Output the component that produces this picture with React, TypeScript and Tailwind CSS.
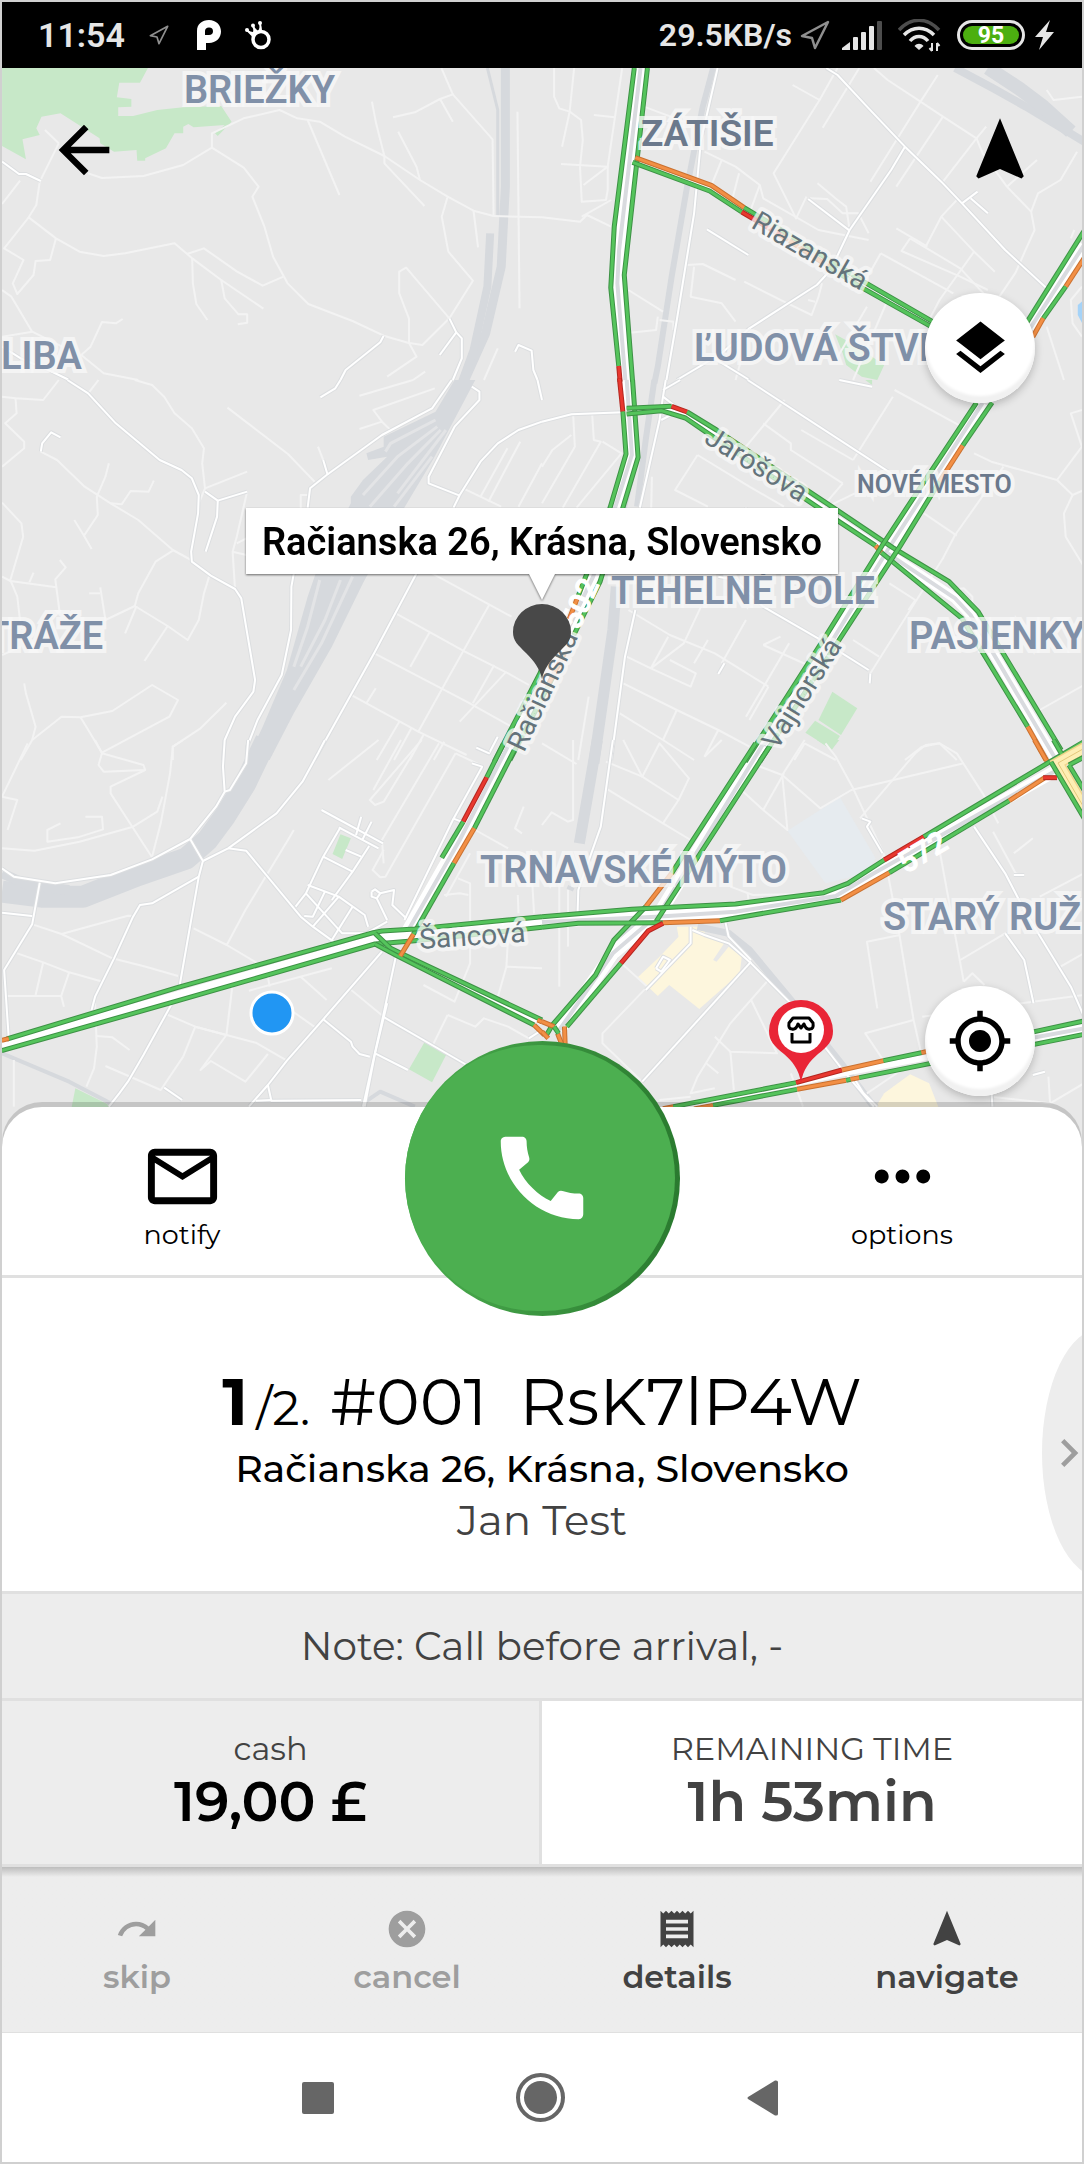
import React from "react";
import {
  MdArrowBack,
  MdCall,
  MdCancel,
  MdChevronRight,
  MdGpsFixed,
  MdLayers,
  MdMailOutline,
  MdMoreHoriz,
  MdNavigation,
  MdReceipt,
  MdRedo,
} from "react-icons/md";

type Flow = "free" | "slow" | "jam";
type TrafficLine = [Flow, string];

interface TileData {
  x: number;
  y: number;
  parks?: string[];
  sand?: string[];
  pale?: string[];
  water?: string[];
  rails?: [number, string][];
  railAreas?: string[];
  railGaps?: string[];
  lanes?: string[];
  streets?: string[];
  casings?: [number, string][];
  traffic?: TrafficLine[];
}

const FLOW: Record<Flow, [string, string]> = {
  free: ["#3d9145", "#55c45c"],
  slow: ["#c9702f", "#f28f45"],
  jam: ["#b3261f", "#e8382f"],
};

// Each tile is drawn on its own 1568-unit-wide grid, three units per pixel in height.
const TILES: TileData[] = [
  {
    x: 0,
    y: 0,
    parks: [
      "6,204 428,204 405,248 345,248 338,292 380,297 380,320 342,322 342,348 385,348 455,330 530,322 640,318 670,365 630,408 622,400 650,375 560,382 545,372 530,380 530,400 505,400 480,445 420,475 420,482 397,482 395,450 330,455 290,430 288,415 175,340 120,350 105,385 115,405 65,418 75,478 6,438",
    ],
    rails: [
      [9, "1462,204 1462,560 1450,800 1405,1000 1340,1150"],
      [3, "1410,204 1440,330 1440,650"],
      [8, "1418,700 1410,860 1370,1050 1335,1150"],
    ],
    lanes: [
      "255,520 295,534 415,528 530,495 613,443 705,503 748,560 730,590 765,680 790,770 832,850 892,912 1020,963 1110,1007 1180,1028 1222,1035 1300,955 1368,842 1297,755 1278,650 1295,590 1215,540 1112,468 998,410 925,365 860,355 809,330 705,355 613,400 613,443",
      "170,430 115,545 105,615 83,652 12,745 68,780 37,850 50,882 97,825 103,783 145,780 162,715",
      "6,612 58,542",
      "83,652 162,715 230,755 300,768 362,760 505,730 556,775 640,840 762,926",
      "541,762 590,745 686,815 760,857 820,830",
      "556,775 558,850 568,912 600,960",
      "640,840 650,895 690,943 715,943 715,968 688,973",
      "890,360 982,585",
      "1076,305 1088,370 1112,468 1112,490 1228,618",
      "1152,395 1205,500 1215,540",
      "1137,352 1200,337 1273,297 1310,283 1277,204",
      "1273,297 1310,365",
      "1310,283 1425,418 1428,650",
      "1295,590 1370,632 1428,648",
      "1370,632 1383,742",
      "1300,955 1175,803 1155,815 1155,880 1183,955 1183,1028 1205,1070 1120,1130",
      "1497,335 1503,925",
      "1428,648 1568,652",
      "355,957 335,970 295,966 262,1040 235,1065 300,1120 400,1140",
      "6,870 33,890 93,995 180,1040",
      "6,1010 93,995",
      "1230,1115 1195,1140",
      "1440,1045 1400,1140",
      "130,390 170,430",
    ],
    streets: [
      "6,485 55,522 75,522 118,543",
      "1110,1007 1100,1027 1000,1110 985,1140",
      "1300,955 1320,997 1336,1015 1336,1075 1310,1140",
      "1320,997 1272,1065",
      "1490,1055 1500,1035 1538,1052 1543,1110 1555,1140",
      "6,1040 60,1075 140,1110 200,1140",
    ],
  },
  {
    x: 542,
    y: 0,
    parks: ["848,1003 905,1035 990,1095 970,1140 925,1130 880,1095 870,1060"],
    water: ["1568,900 1550,915 1550,945 1568,980"],
    rails: [
      [6, "495,204 465,320 418,570 375,830 335,1100 325,1150"],
      [8, "1195,204 1305,265 1400,320 1568,425"],
      [14, "1290,204 1380,265 1450,320 1530,395"],
    ],
    lanes: [
      "35,204 35,290 50,325 80,335 113,360 118,420 110,500 115,605 185,600 190,570 190,500 55,492",
      "93,204 80,335 58,440",
      "150,345 210,352",
      "232,204 190,500 120,555",
      "115,650 200,600",
      "0,652 110,665 130,645 200,680",
      "725,255 803,300 855,204",
      "803,300 670,520 735,655 765,590",
      "918,204 812,383",
      "960,204 1000,240 1095,305 1160,350 1257,415 1285,380",
      "1145,225 1095,305 950,545",
      "1160,350 1025,560",
      "1257,415 1275,460 1345,560 1415,635 1425,690 1398,752 1370,818 1310,910",
      "1257,415 1160,545",
      "1432,480 1345,560",
      "1548,455 1500,540 1435,580 1415,635",
      "295,320 450,380",
      "470,455 560,500 630,555 640,595 800,690 945,720",
      "520,480 490,556",
      "570,520 550,600",
      "630,555 600,640",
      "797,550 855,600 880,620 890,690",
      "775,595 825,597 870,640 915,640 945,700",
      "1065,715 1040,753 1210,830 1290,870",
      "1065,715 1210,805 1295,900",
      "1025,685 1115,740",
      "1155,650 1250,755 1310,815",
      "1200,600 1155,650 1110,740",
      "980,760 1190,880",
      "980,760 920,870",
      "1250,755 1150,900 1120,960",
      "420,795 465,792 560,840",
      "440,800 430,890 520,910 560,965",
      "585,845 700,905 780,945 800,890 810,850",
      "770,900 790,905",
      "250,870 350,935",
      "335,950 330,990 240,1000",
      "340,960 380,965 380,990",
      "1000,900 900,1140",
      "940,920 850,1080",
      "600,990 560,1140",
      "1460,270 1480,300 1562,290",
      "1540,690 1530,715",
      "1562,860 1530,900 1535,970 1562,1010",
      "1460,980 1510,1140",
    ],
    streets: [
      "508,204 460,420 440,640 390,960 360,1140",
      "822,204 855,225 945,325 1050,440 1155,545 1215,610 1340,750 1460,865",
      "1050,440 1010,510 890,690 835,810 795,855 600,985",
      "1215,610 1260,575",
      "1240,595 1290,640",
      "770,597 890,692",
      "477,688 597,765",
      "390,1140 520,1060 600,985",
      "490,1070 600,1140",
    ],
    casings: [
      [13, "285,204 223,750 218,850 242,1150"],
      [5, "270,480 487,565 690,690 1130,974"],
      [13, "1568,735 1412,985"],
    ],
    traffic: [
      ["free", "267,204 209,680 199,863 222,1098"],
      ["jam", "222,1098 226,1145"],
      ["free", "305,204 275,480 238,825 262,1145"],
      ["slow", "270,473 490,556 585,623"],
      ["free", "585,623 700,695 930,845 1130,965"],
      ["free", "262,487 485,573 578,636"],
      ["jam", "578,636 690,705"],
      ["slow", "690,705 830,800"],
      ["free", "830,800 920,860 1130,982"],
      ["free", "1568,693 1395,980"],
      ["slow", "1568,775 1515,860"],
      ["free", "1515,860 1450,955"],
      ["slow", "1450,955 1420,1010"],
    ],
  },
  {
    x: 0,
    y: 380,
    railAreas: [
      "1315,0 1375,0 1255,235 1160,400 1050,610 960,800 850,1000 780,1140 715,1140 760,1040 830,870 890,650 920,560 1015,370 1015,350 1050,300 1120,230 1065,240 1060,220 1110,200 1110,170 1260,95",
    ],
    railGaps: [
      "1260,120 1130,190 1115,215",
      "1265,140 1150,230 1050,345",
      "1275,150 1180,250 1070,380",
      "1290,150 1150,340",
      "1250,230 1140,380",
      "925,600 890,740 850,860",
      "985,600 940,720 870,860",
      "1020,590 930,790 850,930",
    ],
    lanes: [
      "6,50 45,55 125,60 170,0",
      "45,55 48,100 15,130 70,185 70,205 6,260",
      "255,40 285,0",
      "390,0 440,15 475,50 505,100 555,145 590,205 585,250 593,325 715,275",
      "658,83 833,222 910,305",
      "315,250 305,290 280,350 283,405 243,467 215,420",
      "243,467 265,507",
      "118,215 165,240 245,320 320,370 400,420 500,510 553,540",
      "320,370 352,373 378,333 430,335 445,302",
      "6,368 62,430 67,470 30,600 50,650 60,740",
      "6,590 30,603 163,622 160,598 190,562 173,540",
      "85,607 97,578",
      "163,622 173,700",
      "290,622 305,720 390,678 400,640 450,545 500,512",
      "258,640 290,640",
      "390,678 485,738 543,780 575,720 590,640 605,590",
      "485,738 418,843",
      "395,678 362,760",
      "6,825 60,800",
      "70,910 75,940 103,1040 93,1080 60,1140",
      "93,1080 178,1010 233,1012 325,993 440,915 515,960 490,1010 295,1118",
      "233,1012 295,1118",
      "655,968 580,1045 500,1100 500,1140",
      "715,335 685,470 673,515 680,630",
      "673,515 713,525",
      "685,490 713,475",
      "593,325 575,370",
      "870,385 870,345 890,345",
      "1040,47 1195,0",
      "1258,25 1080,90 1105,125 1130,150",
      "1040,147 1105,125",
      "1468,205 1390,350",
      "1505,185 1413,365",
      "1568,250 1500,380",
      "1340,325 1450,380",
      "1250,580 1480,710",
      "1415,675 1285,915 1210,1055",
      "1145,700 1345,815 1470,880 1530,915",
      "1243,757 1187,860",
      "1083,820 1350,965 1480,1040",
      "1430,855 1368,970",
      "1465,875 1330,1025",
      "1013,943 1210,1055 1350,1125",
      "1087,925 1060,970",
      "1155,1025 1090,1140",
      "1190,1045 1140,1140",
      "1225,1065 1185,1140",
      "1285,1085 1255,1140",
      "920,200 935,240",
    ],
    streets: [
      "195,0 255,40 335,130 462,240 525,270 555,295 575,345 573,400 553,515 555,545 610,587 680,627 698,655 738,900 733,935 680,1010 650,1080 645,1140",
      "118,215 122,190 148,157 175,172",
      "593,335 630,362 715,335",
      "630,362 628,410 595,515",
      "985,0 970,25 927,52",
      "1307,0 1250,85 1105,165 945,285 897,325 890,383",
      "935,240 948,285",
      "1365,20 1387,35 1387,60 1315,140 1240,290 1240,310 1330,347",
      "1568,125 1500,150 1440,190 1390,245 1330,345 1312,383",
      "1205,580 1083,818 910,1140",
      "850,580 843,620 842,750 815,885 745,1020 715,1100 715,1140",
      "1378,1103 1415,1120 1440,1070",
      "1555,0 1568,60",
    ],
    casings: [[12, "1600,880 1445,1150"]],
    traffic: [
      ["free", "1585,820 1562,880 1430,1145"],
      ["free", "1605,880 1475,1140"],
    ],
  },
  {
    x: 542,
    y: 380,
    parks: [
      "840,935 912,985 865,1065 800,1020",
      "790,1022 862,1068 838,1108 762,1058",
      "935,0 955,0 955,15",
    ],
    rails: [
      [6, "325,0 300,180 275,380"],
      [11, "215,620 205,750 150,1150"],
      [4, "262,0 278,220 240,383"],
    ],
    lanes: [
      "90,100 95,200 0,370",
      "145,100 150,180 170,185 60,383",
      "85,165 30,210 0,260",
      "175,185 230,220 100,383",
      "450,225 385,330 480,380",
      "450,225 600,320 700,380",
      "640,130 720,190 720,210 870,310",
      "702,60 590,200",
      "870,310 810,383",
      "900,240 750,150",
      "1015,50 900,240",
      "1020,30 1250,160",
      "905,340 820,383",
      "1250,220 1300,245 1490,300 1535,345 1510,400 1515,470 1568,560",
      "1490,300 1562,200 1530,100 1562,90",
      "1535,345 1568,330",
      "1335,260 1195,465 1160,535 980,830 950,880",
      "1105,400 1200,467",
      "1180,630 1220,625 1245,650 1245,690",
      "1005,610 1080,660 1060,690",
      "900,780 975,830",
      "250,690 370,765 500,820 655,920",
      "460,680 410,790 315,865",
      "590,720 520,850",
      "640,795 690,770",
      "640,795 800,870",
      "245,830 315,865 430,920 445,880 370,840",
      "315,865 365,770",
      "480,780 440,850",
      "235,910 390,990 510,1050 600,1100",
      "390,990 350,1080",
      "510,1050 470,1130",
      "225,1000 350,1080 440,1140",
      "715,790 590,1010",
      "655,920 600,1020",
      "135,950 105,1140",
      "760,1090 730,1140",
      "760,1090 850,1140",
      "1100,1100 1150,1090 1200,1140",
      "1050,1140 1100,1100",
      "1568,915 1440,990",
      "318,290 316,383",
    ],
    streets: [
      "0,125 85,103 235,97",
      "358,0 350,50 340,120 283,383",
      "270,690 240,830 200,1140",
      "595,0 1010,280",
      "350,30 400,0",
      "350,50 400,90 345,120",
      "510,590 560,600 640,680 815,785 945,870",
      "528,850 510,882",
      "950,880 948,910",
      "860,0 955,20",
      "590,383 590,395",
    ],
    casings: [
      [13, "245,0 260,225 148,590 60,780 -50,1000"],
      [4, "245,93 360,86 420,106 980,500"],
      [12, "1275,68 1000,510 835,790 608,1150"],
      [10, "1000,520 1195,655 1240,705 1482,1130"],
    ],
    traffic: [
      ["jam", "224,-5 234,95"],
      ["free", "234,95 243,222 197,383 130,580 104,650"],
      ["slow", "104,650 70,740"],
      ["slow", "65,820 20,910"],
      ["free", "262,0 278,232 234,383 168,605 92,765"],
      ["free", "245,85 375,79"],
      ["jam", "375,79 420,96"],
      ["free", "420,96 505,150 860,395 1015,503 1178,605 1262,695 1502,1110"],
      ["free", "245,102 345,92 415,114 480,160 855,422 965,497"],
      ["slow", "965,497 982,518"],
      ["free", "982,518 1215,715 1405,1040"],
      ["slow", "1405,1040 1462,1145"],
      ["free", "1257,68 1045,400 985,495 820,770 588,1145"],
      ["free", "1302,68 1217,197"],
      ["slow", "1217,197 1150,305"],
      ["free", "1150,305 1035,500 850,795 630,1145"],
    ],
  },
  {
    x: 0,
    y: 740,
    parks: [
      "985,283 1015,295 990,357 962,342",
      "1228,907 1292,942 1250,1027 1183,988",
      "218,1045 310,1092 350,1140 200,1140",
    ],
    rails: [
      [22, "770,0 710,130 650,230 600,300 540,355 400,405 240,470 120,470 6,455"],
      [10, "6,400 80,435 200,450"],
      [4, "6,940 200,1025 320,1090"],
      [4, "1050,1090 1100,1055 1200,1100"],
    ],
    lanes: [
      "80,10 6,170 50,180 22,270",
      "275,0 295,40 285,75 300,95 420,90 415,75 295,40",
      "420,90 320,140 320,160 445,360",
      "530,0 500,20 492,100 465,250 440,350",
      "6,325 100,332 230,305 385,260 455,215 470,170",
      "247,230 295,230 298,268 225,292 137,305 137,270 175,250",
      "850,270 833,300 710,510 656,615 560,565",
      "656,615 745,670",
      "94,553 178,582 370,527 385,528",
      "178,582 325,655 422,680 515,708",
      "50,640 125,667 200,697 297,725",
      "125,667 103,765",
      "200,697 177,768 185,800",
      "15,768 177,768",
      "275,790 280,920 272,985 250,1040",
      "280,888 325,892 375,930",
      "305,978 465,1050 530,950",
      "480,822 565,860 655,885 740,908 830,962",
      "565,860 530,950",
      "565,860 655,885 580,990 610,963 710,1025 775,942",
      "655,885 672,740",
      "720,752 960,685",
      "775,710 780,740",
      "870,710 945,780",
      "800,780 912,862",
      "40,960 40,1100",
      "1010,745 1110,830",
      "1095,0 950,120",
      "1160,0 1080,150",
      "1220,0 1070,180 1085,195 1110,185 1195,40",
      "1270,10 1105,300 1110,370",
      "1318,40 1115,410 1100,412 1078,390 1110,330",
      "1318,40 1400,80",
      "1225,735 1315,785 1360,670 1360,430 1325,415",
      "1285,465 1330,460 1355,465",
      "1295,825 1250,920",
      "1295,825 1375,860 1400,835 1470,860 1530,895",
      "1375,270 1470,325",
      "1515,200 1490,265 1510,280",
      "1470,590 1465,680 1568,685",
      "1465,680 1435,790",
      "1360,340 1290,470",
      "1498,465 1500,520",
      "1540,430 1545,520",
    ],
    streets: [
      "5,385 40,410 160,430 320,405 440,358 550,297 625,200 650,155 645,80 650,0",
      "650,155 665,150 712,70 718,0",
      "115,428 93,553 12,690 25,890",
      "6,518 93,528",
      "550,297 587,363 575,410 520,735",
      "587,363 660,325 800,220 875,125 920,40 940,0",
      "660,325 712,332 870,530 905,560 965,605",
      "575,410 440,490 405,495 385,530 330,655 275,770 265,810",
      "495,795 415,945 370,1025 345,1060 315,1100",
      "1105,635 935,838 830,962 775,1035 720,1100",
      "935,838 1015,905 1020,920 1040,942 1070,950",
      "1145,650 1108,830 1050,1100",
      "1120,790 1085,940 1055,1100",
      "1108,830 1350,975",
      "1085,940 1180,990",
      "775,1035 785,1082 1045,1080",
      "740,1082 785,1080",
      "475,1043 527,1080",
      "930,210 1108,310",
      "980,262 1095,325",
      "1045,230 1030,285",
      "1075,245 1048,300",
      "1068,318 1020,395 960,480",
      "985,262 935,350 885,460 855,500",
      "935,350 1020,395",
      "1000,330 1045,350",
      "890,435 980,470 1055,525 1065,560",
      "885,460 990,580 1060,580 1120,545",
      "940,455 905,530 880,528",
      "980,470 905,560",
      "1020,500 960,600",
      "1365,70 1395,80 1310,240 1170,540",
      "1310,235 1335,245",
      "1075,455 1085,448 1100,460 1090,475 1075,470 1075,455",
      "1100,460 1140,450 1135,495 1175,535",
      "1090,475 1120,540",
      "1378,23 1415,40",
      "1530,895 1568,870",
    ],
    casings: [
      [13, "1471,15 1330,300 1165,600"],
      [8, "5,915 515,765 1090,595 1568,545"],
      [5, "1085,597 1160,650 1568,848"],
    ],
    traffic: [
      ["free", "1456,12 1408,112"],
      ["jam", "1408,112 1340,245"],
      ["free", "1340,245 1278,353"],
      ["free", "1488,30 1372,265"],
      ["slow", "1372,265 1313,370"],
      ["free", "1313,370 1196,583"],
      ["free", "20,897 515,742 1080,578 1105,573 1200,567 1568,530"],
      ["slow", "5,901 25,896"],
      ["free", "5,932 495,788 1085,612 1200,602 1568,562"],
      ["free", "1085,580 1130,625 1170,645 1568,840"],
      ["free", "1085,612 1150,648 1545,855"],
      ["slow", "1545,855 1575,885"],
      ["slow", "1555,840 1568,846"],
      ["slow", "1196,583 1158,648"],
    ],
  },
  {
    x: 542,
    y: 740,
    parks: ["795,0 860,0 838,30"],
    sand: [
      "390,560 475,560 470,580 530,605 495,660 505,665 540,620 578,650 572,700 455,807 368,735 335,768 277,712 340,650 395,590",
      "1065,1003 1120,1030 1150,1110 960,1110 990,1060",
    ],
    pale: ["862,172 965,355 940,400 820,430 710,272"],
    rails: [
      [11, "160,0 130,180 108,310"],
      [7, "85,440 80,450"],
      [7, "450,560 540,580 600,630 720,780 880,990 960,1100"],
      [10, "300,520 190,670"],
    ],
    lanes: [
      "0,10 100,72",
      "235,0 290,110 395,180 350,250 430,300",
      "185,65 290,110 340,10 425,115 395,180",
      "185,145 350,250",
      "0,255 28,217 75,245 90,240 90,0",
      "50,390 50,740",
      "75,450 75,620",
      "470,50 520,0",
      "580,60 695,105 805,205 895,150 1220,70",
      "545,120 640,210 710,270 695,105 760,0",
      "640,210 700,100",
      "820,10 850,50 900,145 990,345 1030,560 1075,840 1095,930",
      "920,235 1080,40 1110,15 1150,10 1200,40 1275,160 1320,250",
      "990,345 940,420",
      "1150,330 1220,725",
      "1035,585 940,605 970,805",
      "1220,725 1245,700 1280,735",
      "1210,660 1340,580 1395,660 1425,790",
      "1440,470 1568,400",
      "1305,275 1370,400 1390,405",
      "1365,340 1420,295",
      "235,675 305,740 175,880 175,910 290,1025",
      "655,720 545,850 450,1010 430,1060 500,1045",
      "605,780 680,940 545,935 500,890",
      "545,935 555,1050",
      "720,1000 755,1100",
      "475,970 510,1000",
      "1075,840 935,880 1000,980",
      "1100,830 1568,765",
      "340,1080 430,1070",
      "1500,680 1568,640",
      "940,1060 1040,990",
      "1300,1070 1470,1090 1568,1030",
      "1470,1090 1465,1010",
      "595,460 600,500",
      "545,440 610,465 800,462",
    ],
    streets: [
      "205,0 170,260 105,450 103,515",
      "1568,830 1530,740 1400,520 1340,400 1250,260",
      "1340,580 1395,660 1422,790",
      "435,570 470,585 540,610 605,670 720,790 870,990 960,1100",
      "525,520 540,590 605,660",
      "605,665 290,1025",
      "430,560 430,610 300,750",
      "330,685 350,650 370,660 345,695 330,685",
      "925,235 950,245 940,260 985,340",
      "900,1010 930,1060 970,1100",
      "1420,1005 1455,995",
      "1365,405 1395,405",
      "1300,1050 1303,1100",
    ],
    casings: [
      [13, "638,15 340,520 205,640 50,870"],
      [12, "0,546 330,530 560,515 850,468 960,400 1490,90"],
      [6, "350,1112 860,1002 1125,950"],
      [12, "1420,893 1568,865"],
    ],
    traffic: [
      ["free", "618,10 415,335 375,400"],
      ["slow", "375,400 300,500"],
      ["free", "300,500 208,600 155,705 30,855 10,890"],
      ["free", "658,20 455,345 330,545"],
      ["free", "0,530 260,508 560,492 815,458 885,430 990,360"],
      ["jam", "990,360 1105,290"],
      ["free", "1105,290 1470,65 1568,5"],
      ["free", "0,562 105,550 350,548"],
      ["slow", "350,548 515,542"],
      ["free", "515,542 865,480"],
      ["slow", "865,480 1005,398"],
      ["free", "1005,398 1352,182"],
      ["slow", "1352,182 1455,113"],
      ["jam", "1450,113 1490,113"],
      ["jam", "350,550 308,572 228,670"],
      ["free", "228,670 72,860"],
      ["slow", "0,845 35,860"],
      ["slow", "0,875 18,895"],
      ["slow", "65,860 67,915"],
      ["slow", "45,880 58,915"],
      ["free", "35,860 48,880"],
      ["slow", "1425,0 1458,60"],
      ["free", "1480,0 1505,45"],
      ["slow", "350,1106 380,1100"],
      ["free", "380,1100 735,1028"],
      ["jam", "735,1028 868,990"],
      ["slow", "868,990 988,962"],
      ["free", "988,962 1098,938"],
      ["slow", "1098,938 1125,932"],
      ["free", "1415,877 1568,843"],
      ["slow", "440,1107 495,1096"],
      ["free", "495,1096 738,1048"],
      ["slow", "738,1048 880,1021"],
      ["free", "880,1021 893,1018"],
      ["slow", "893,1018 918,1013"],
      ["free", "918,1013 1125,970"],
      ["free", "1420,914 1568,883"],
    ],
  },
];

function Stroke({ points, color, width }: { points: string; color: string; width: number }) {
  return (
    <polyline
      points={points}
      fill="none"
      stroke={color}
      strokeWidth={width}
      strokeLinejoin="round"
      vectorEffect="non-scaling-stroke"
    />
  );
}

function Grid({ tile, children }: { tile: TileData; children: React.ReactNode }) {
  return <g transform={`translate(${tile.x} ${tile.y}) scale(${542 / 1568} ${1 / 3})`}>{children}</g>;
}

const AREAS = [
  { x: 184, y: 103, text: "BRIEŽKY", color: "#8090a8", size: 38 },
  { x: 641, y: 146, text: "ZÁTIŠIE", color: "#6b798c", size: 37 },
  { x: 694, y: 361, text: "ĽUDOVÁ ŠTVR", color: "#8090a8", size: 38 },
  { x: 857, y: 493, text: "NOVÉ MESTO", color: "#6b798c", size: 25 },
  { x: 611, y: 604, text: "TEHELNÉ POLE", color: "#8090a8", size: 38 },
  { x: 909, y: 649, text: "PASIENKY", color: "#8090a8", size: 38 },
  { x: 1, y: 369, text: "LIBA", color: "#8090a8", size: 38 },
  { x: -14, y: 649, text: "TRÁŽE", color: "#8090a8", size: 38 },
  { x: 480, y: 883, text: "TRNAVSKÉ MÝTO", color: "#8090a8", size: 38 },
  { x: 883, y: 930, text: "STARÝ RUŽ", color: "#8090a8", size: 38 },
];

const STREET_NAMES = [
  { x: 750, y: 227, angle: 30, text: "Riazanská" },
  { x: 703, y: 442, angle: 32, text: "Jarošova" },
  { x: 777, y: 751, angle: -58, text: "Vajnorská" },
  { x: 524, y: 753, angle: -65, text: "Račianska" },
  { x: 420, y: 949, angle: -4, text: "Šancová" },
];

const ROAD_NUMBERS = [
  { x: 579, y: 631, angle: -66, text: "502" },
  { x: 906, y: 874, angle: -31, text: "572" },
];

function CityMap() {
  return (
    <svg
      className="absolute inset-0 h-full w-full"
      viewBox="2 68 1080 1082"
      preserveAspectRatio="xMidYMin slice"
      role="img"
      aria-label="Traffic map"
    >
      <rect x="0" y="0" width="1084" height="1200" fill="#e8e8e8" />
      {TILES.map((t, i) => (
        <Grid key={i} tile={t}>
          {t.parks?.map((p, k) => <polygon key={k} points={p} fill="#c7e8c8" />)}
          {t.sand?.map((p, k) => <polygon key={k} points={p} fill="#fdf6dd" />)}
          {t.pale?.map((p, k) => <polygon key={k} points={p} fill="#e6ebef" />)}
          {t.water?.map((p, k) => <polygon key={k} points={p} fill="#a5d3f8" />)}
          {t.railAreas?.map((p, k) => <polygon key={k} points={p} fill="#d6d9dd" />)}
          {t.rails?.map(([w, p], k) => <Stroke key={k} points={p} color="#d6d9dd" width={w} />)}
          {t.railGaps?.map((p, k) => <Stroke key={k} points={p} color="#e3e4e6" width={3} />)}
          {t.lanes?.map((p, k) => <Stroke key={k} points={p} color="#f3f3f3" width={2} />)}
          {t.streets?.map((p, k) => <Stroke key={k} points={p} color="#dcdee0" width={4} />)}
          {t.streets?.map((p, k) => <Stroke key={k} points={p} color="#ffffff" width={2} />)}
        </Grid>
      ))}
      {TILES.map((t, i) => (
        <Grid key={i} tile={t}>
          {t.casings?.map(([w, p], k) => (
            <g key={k}>
              <Stroke points={p} color="#ffffff" width={w} />
              {w > 9 && <Stroke points={p} color="#d9dbdf" width={4} />}
            </g>
          ))}
        </Grid>
      ))}
      {TILES.map((t, i) => (
        <Grid key={i} tile={t}>
          {t.traffic?.map(([flow, p], k) => (
            <g key={k}>
              <Stroke points={p} color={FLOW[flow][0]} width={5} />
              <Stroke points={p} color={FLOW[flow][1]} width={3} />
            </g>
          ))}
        </Grid>
      ))}
      <g fill="none">
        <path d="M1090 745 L1058 763 L1090 818" stroke="#f0d58c" strokeWidth="12" />
        <path d="M1090 745 L1058 763 L1090 818" stroke="#fdeeb4" strokeWidth="9" />
        <path d="M1090 745 L1058 763 L1090 818" stroke="#e3c77c" strokeWidth="1" />
        <path d="M1051 762 L1090 828 M1069 765 L1090 800 M1069 765 L1090 754" stroke="#3d9145" strokeWidth="5" />
        <path d="M1051 762 L1090 828 M1069 765 L1090 800 M1069 765 L1090 754" stroke="#55c45c" strokeWidth="3" />
      </g>

      <g fontFamily="Roboto, sans-serif">
        {ROAD_NUMBERS.map((r) => (
          <text
            key={r.text}
            transform={`translate(${r.x} ${r.y}) rotate(${r.angle})`}
            fontSize="30"
            fontWeight="500"
            fill="#ffffff"
            stroke="#ffffff"
            strokeWidth="1"
          >
            {r.text}
          </text>
        ))}
        {STREET_NAMES.map((s) => (
          <g key={s.text} transform={`translate(${s.x} ${s.y}) rotate(${s.angle})`} fontSize="28">
            <text fill="none" stroke="#f7f7f7" strokeOpacity="0.75" strokeWidth="8" strokeLinejoin="round" aria-hidden="true">
              {s.text}
            </text>
            <text fill="#64737b">{s.text}</text>
          </g>
        ))}
        {AREAS.map((a) => (
          <g key={a.text} fontSize={a.size} fontWeight="600">
            <text x={a.x} y={a.y} fill="none" stroke="#f8f8f8" strokeOpacity="0.8" strokeWidth="8" aria-hidden="true">
              {a.text}
            </text>
            <text x={a.x} y={a.y} fill={a.color}>
              {a.text}
            </text>
          </g>
        ))}
      </g>

      <circle cx="272" cy="1013" r="21" fill="#2196f3" stroke="#ffffff" strokeWidth="3" />

      <g>
        <path
          d="M801 1083 C799 1069 792 1061 784 1054 C774 1046 769 1041 769 1031 A32 31 0 0 1 833 1031 C833 1041 828 1046 818 1054 C810 1061 803 1069 801 1083Z"
          fill="#e92536"
        />
        <circle cx="801" cy="1030" r="23" fill="#ffffff" />
        <g fill="none" stroke="#000000" strokeWidth="3" strokeLinejoin="round">
          <path d="M793 1018 H809 L813 1023 Q814 1029 810 1029 Q806 1030 804 1024 L801 1028 L798 1024 Q796 1030 792 1029 Q788 1029 789 1023Z" />
          <path d="M792 1033 V1042 H810 V1033" />
        </g>
      </g>

      <path
        d="M542 679 C540 669 534 661 526 653 C518 645 513 641 513 632 A29 28 0 0 1 571 632 C571 641 566 645 558 653 C550 661 544 669 542 679Z"
        fill="#484848"
      />
    </svg>
  );
}

function LocationArrow({ className }: { className: string }) {
  return (
    <svg viewBox="0 0 30 30" className={className} fill="none" stroke="currentColor" strokeWidth="2.5" aria-hidden="true">
      <path d="M28 2 L2 16 L12 18 L15 28Z" strokeLinejoin="round" />
    </svg>
  );
}

function StatusBar() {
  return (
    <header className="flex h-[66px] items-center justify-between bg-black pr-7 pl-9 text-[#e6e6e6]">
      <div className="flex items-center">
        <span className="text-[34px] leading-10 font-semibold">11:54</span>
        <LocationArrow className="ml-6 size-5 text-[#8f8f8f]" />
        <svg viewBox="0 0 24 30" className="ml-7 h-[30px] w-6" aria-hidden="true">
          <path
            fillRule="evenodd"
            fill="#ffffff"
            d="M0 30 V11 C0 4 5 0 12 0 C19 0 24 5 24 11.500 C24 18 19 23 12 23 H9 V30Z M8 15 H12 A4 3.800 0 1 0 8 11Z"
          />
        </svg>
        <svg viewBox="0 0 26 29" className="ml-6 h-[29px] w-[26px]" aria-hidden="true">
          <circle cx="16" cy="18.500" r="8" fill="none" stroke="#ffffff" strokeWidth="3.500" />
          <g stroke="#ffffff" strokeWidth="2">
            <path d="M2 9 L8 15 M8 5 L11 12 M15 2 L16 11" />
          </g>
          <g fill="#ffffff">
            <circle cx="2" cy="9" r="2" />
            <circle cx="8" cy="4.500" r="2" />
            <circle cx="15" cy="2" r="2" />
            <path d="M3 10 L8 11 L9 6 L13 10 L16 4 L17 11 L8 15Z" />
          </g>
        </svg>
      </div>
      <div className="flex items-center">
        <span className="text-[32px] leading-10 font-semibold">29.5KB/s</span>
        <LocationArrow className="ml-2 size-[30px] text-[#8f8f8f]" />
        <svg viewBox="0 0 40 29" className="ml-3 h-[29px] w-10" aria-hidden="true">
          <g fill="#e6e6e6">
            <path d="M0 29 V27 L8 21 V29Z" />
            <rect x="11" y="16" width="5" height="13" rx="1" />
            <rect x="19" y="11" width="5" height="18" rx="1" />
            <rect x="27" y="5" width="5" height="24" rx="1" />
          </g>
          <rect x="35" y="0" width="5" height="29" rx="1" fill="#4d4d4d" />
        </svg>
        <svg viewBox="0 0 43 33" className="ml-4 h-[33px] w-[43px]" fill="none" aria-hidden="true">
          <path d="M1 11 C13 -2 29 -2 41 11" stroke="#4d4d4d" strokeWidth="3.500" />
          <path d="M6 16 C15 7 27 7 36 16" stroke="#e6e6e6" strokeWidth="3.500" />
          <path d="M12 22 C17 16 25 16 30 22" stroke="#e6e6e6" strokeWidth="3.500" />
          <path d="M16.500 27 C19 24 23 24 25.500 27 L21 31Z" fill="#e6e6e6" />
          <path d="M34 24 V32 M34 32 L31.500 29 M39 32 V24 M39 24 L41.500 27" stroke="#e6e6e6" strokeWidth="2" />
        </svg>
        <span className="ml-4 flex h-[30px] w-[68px] rounded-full border-[3px] border-[#e6e6e6] p-[3px]">
          <span className="flex flex-1 items-center justify-center rounded-full bg-[#4caf10] text-[23px] leading-none font-bold text-white">
            95
          </span>
        </span>
        <svg viewBox="0 0 19 30" className="ml-2.5 h-[30px] w-[19px]" fill="#e6e6e6" aria-hidden="true">
          <path d="M15 0 L0 17 H8 L4 30 L19 12 H11Z" />
        </svg>
      </div>
    </header>
  );
}

function RoundMapButton({ label, className, children }: { label: string; className: string; children: React.ReactNode }) {
  return (
    <button
      type="button"
      aria-label={label}
      className={`absolute flex size-[110px] items-center justify-center rounded-full bg-white text-black shadow-[inset_0_-7px_3px_#f1f1f1,0_3px_9px_rgba(0,0,0,0.22)] ${className}`}
    >
      {children}
    </button>
  );
}

function MapSection() {
  return (
    <section className="relative min-h-[1082px] flex-1 overflow-hidden bg-[#e8e8e8]">
      <CityMap />
      <button type="button" aria-label="Back" className="absolute top-11 left-11 text-black">
        <MdArrowBack className="size-[76px]" />
      </button>
      <button type="button" aria-label="Compass" className="absolute top-11 right-11 text-black">
        <MdNavigation className="size-[76px]" />
      </button>
      <RoundMapButton label="Map layers" className="top-[225px] right-[47px]">
        <MdLayers className="size-[65px]" />
      </RoundMapButton>
      <RoundMapButton label="Centre on my location" className="right-[47px] bottom-[54px]">
        <MdGpsFixed className="size-[66px]" />
      </RoundMapButton>
      <div className="absolute top-[440px] left-1/2 flex -translate-x-1/2 flex-col items-center drop-shadow-[0_1px_1px_rgba(0,0,0,0.55)]">
        <p className="bg-white px-4 pt-[9px] pb-[7px] text-[38px] leading-[50px] font-semibold whitespace-nowrap text-black">
          Račianska 26, Krásna, Slovensko
        </p>
        <svg viewBox="0 0 26 26" className="size-[26px]" fill="#ffffff" aria-hidden="true">
          <path d="M0 0 H26 L13 26Z" />
        </svg>
      </div>
    </section>
  );
}

function SheetActions() {
  return (
    <div className="relative grid grid-cols-3 border-b-[3px] border-[#e0e0e0]">
      <button type="button" className="flex h-[168px] flex-col items-center pt-7 text-black">
        <MdMailOutline className="size-[83px]" />
        <span className="text-[27px] leading-[34px]">notify</span>
      </button>
      <div className="flex justify-center">
        <button
          type="button"
          aria-label="Call customer"
          className="absolute -top-[66px] size-[275px] rounded-full bg-linear-to-r from-[#4caf50] to-[#2a7a2f] pt-1 pr-[5px] pb-[5px] text-white"
        >
          <span className="flex size-full items-center justify-center rounded-full bg-[#4caf50] pl-1">
            <MdCall className="size-[110px]" />
          </span>
        </button>
      </div>
      <button type="button" className="flex h-[168px] flex-col items-center pt-7 text-black">
        <MdMoreHoriz className="size-[83px]" />
        <span className="text-[27px] leading-[34px]">options</span>
      </button>
    </div>
  );
}

function OrderSummary() {
  return (
    <div className="relative flex h-[316px] flex-col items-center justify-center overflow-hidden border-b-[3px] border-[#e0e0e0] pt-[42px] whitespace-nowrap">
      <h1 className="flex items-baseline text-[66px] leading-[72px] text-black">
        <b className="font-bold">1</b>
        <span className="ml-2 text-[48px]">/2.</span>
        <span className="ml-5">#001</span>
        <span className="ml-8">RsK7lP4W</span>
      </h1>
      <p className="text-[38px] leading-[50px] font-medium text-black">Račianska 26, Krásna, Slovensko</p>
      <p className="text-[42px] leading-[52px] text-[#424242]">Jan Test</p>
      <button
        type="button"
        aria-label="Next order"
        className="absolute top-[50px] -right-20 flex h-[250px] w-[120px] items-center rounded-[50%] bg-[#ededed] text-[#9e9e9e]"
      >
        <MdChevronRight className="-ml-px size-14" />
      </button>
    </div>
  );
}

const ACTIONS = [
  { label: "skip", Icon: MdRedo, enabled: false },
  { label: "cancel", Icon: MdCancel, enabled: false },
  { label: "details", Icon: MdReceipt, enabled: true },
  { label: "navigate", Icon: MdNavigation, enabled: true },
];

export default function App() {
  return (
    <div className="flex min-h-screen flex-col border-2 border-[#d0d0d0] bg-white font-['Roboto',sans-serif]">
      <StatusBar />
      <MapSection />
      <main className="relative -mt-[43px] rounded-t-[40px] bg-white font-['Montserrat','Inter',sans-serif] shadow-[0_-5px_0_rgba(0,0,0,0.15)]">
        <SheetActions />
        <OrderSummary />
        <p className="border-b-[3px] border-[#e0e0e0] bg-[#ededed] py-[27px] text-center text-[39px] leading-[50px] text-[#424242]">
          Note: Call before arrival, -
        </p>
        <dl className="grid grid-cols-2 border-b-[3px] border-[#e0e0e0] text-center">
          <div className="h-[163px] border-r-[3px] border-[#e0e0e0] bg-[#ededed] pt-7">
            <dt className="text-[32px] leading-10 text-[#424242]">cash</dt>
            <dd className="text-[55px] leading-[66px] font-semibold text-black">19,00 £</dd>
          </div>
          <div className="h-[163px] bg-white pt-7">
            <dt className="text-[32px] leading-10 text-[#424242]">REMAINING TIME</dt>
            <dd className="text-[55px] leading-[66px] font-semibold text-[#424242]">1h 53min</dd>
          </div>
        </dl>
      </main>
      <nav className="grid h-[166px] grid-cols-4 border-b border-[#e0e0e0] bg-[#ededed] bg-linear-to-b from-[#bdbdbd] to-[#ededed] to-[10px] font-['Montserrat','Inter',sans-serif]">
        {ACTIONS.map(({ label, Icon, enabled }) => (
          <button
            key={label}
            type="button"
            disabled={!enabled}
            className="flex flex-col items-center pt-10 text-[#424242] disabled:text-[#9e9e9e]"
          >
            <Icon className="size-11" />
            <span className="mt-1.5 text-[32px] leading-10 font-semibold">{label}</span>
          </button>
        ))}
      </nav>
      <nav className="flex h-[129px] items-center justify-center gap-[182px] pr-1 text-[#666666]">
        <button type="button" aria-label="Recent apps" className="size-8 rounded-[2px] bg-[#666666]" />
        <button
          type="button"
          aria-label="Home"
          className="size-[49px] rounded-full border-4 border-[#666666] p-1"
        >
          <span className="block size-full rounded-full bg-[#666666]" />
        </button>
        <button type="button" aria-label="Back">
          <svg viewBox="0 0 31 36" className="h-9 w-[31px]" fill="currentColor" aria-hidden="true">
            <path d="M1 17 L28 0.500 Q31 0 31 2 V34 Q31 36 28 35.500 L1 19 Q0 18 1 17Z" />
          </svg>
        </button>
      </nav>
    </div>
  );
}
